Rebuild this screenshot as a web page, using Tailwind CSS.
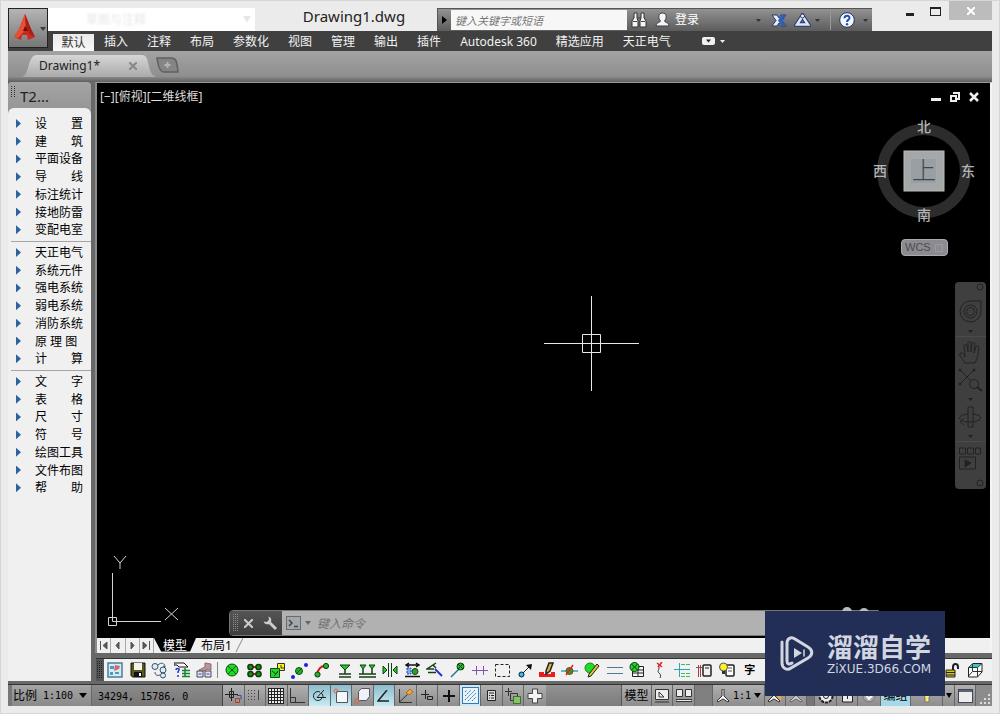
<!DOCTYPE html>
<html lang="zh-CN">
<head>
<meta charset="utf-8">
<title>Drawing1.dwg</title>
<script src="https://cdn.jsdelivr.net/npm/@tailwindcss/browser@4"></script>
</head>
<body class="font-['Noto_Sans','Noto_Sans_CJK_SC',sans-serif] text-xs text-black">
<div class="relative flex min-h-screen flex-col border border-[#d6d6d6] bg-[#ebebeb] px-[7px] pb-[7px]">

  <!-- Title bar -->
  <header class="flex h-[30px] items-end">
    <div class="ml-10 flex h-[23px] w-[207px] items-center justify-between bg-white pr-1 pl-[38px] text-[#e6e6e6]"><span class="blur-[1px]">草图与注释</span><span class="text-[8px]">▼</span></div>
    <h1 class="flex h-[30px] flex-1 items-center justify-center pl-4 text-[15px] whitespace-nowrap text-[#222]">Drawing1.dwg</h1>
    <div class="flex h-[23px] w-[435px] items-center border-t border-l border-[#555] bg-linear-to-b from-[#929292] to-[#5c5c5c]">
      <button aria-label="展开" class="flex w-[13px] justify-center"><svg width="5" height="8"><path d="M0 0L5 4L0 8Z"/></svg></button>
      <input aria-label="搜索" placeholder="键入关键字或短语" class="h-[20px] w-[176px] bg-[#f7f7f7] px-1 text-[11px] italic placeholder:text-[#777]">
      <button aria-label="查找" class="ml-1"><svg width="16" height="16" viewBox="0 0 16 16" fill="#f5f5f5" stroke="#333"><path d="M3 1h3v5l1 3v6H1V9l2-3zM10 1h3v5l2 3v6H9V9l1-3z"/><path d="M6 6h4M2 9.500h4M10 9.500h4" stroke="#444"/></svg></button>
      <button class="ml-2 flex items-center gap-[5px] text-white"><svg width="15" height="16" viewBox="0 0 14 16" fill="#f5f5f5" stroke="#3a3f50"><path d="M7 1c4.500 0 4.500 5 2 8 1 2 4 1 4.500 5H.5C1 10 4 11 5 9 2.500 6 2.500 1 7 1z"/></svg>登录</button>
      <span class="ml-auto flex items-center">
        <svg class="mr-[10px]" width="5" height="3"><path d="M0 0h5L2.500 3z" fill="#333"/></svg>
        <button aria-label="Exchange"><svg width="16" height="15" viewBox="0 0 16 15"><path d="M1 2h5l2 3 2-3h5l-4 5.500 4 5.500h-5l-2-3-2 3H1l4-5.500z" fill="#e8eefc" stroke="#27396b"/><path d="M10.500 2H15l-4 5.500 4 5.500h-4.500L7 7.500z" fill="#2c5fb8"/></svg></button>
        <button aria-label="Autodesk 360" class="ml-[7px] flex items-center gap-1"><svg width="17" height="15" viewBox="0 0 17 15"><path d="M8.500 3L3 11.500h11z" fill="none" stroke="#27396b" stroke-width="4.500"/><path d="M8.500 3L3 11.500h11z" fill="none" stroke="#dfe7fa" stroke-width="2.500"/><circle cx="8.500" cy="3" r="2" fill="#eef" stroke="#27396b"/></svg><svg width="5" height="3"><path d="M0 0h5L2.500 3z" fill="#333"/></svg></button>
        <span class="mx-2 ml-[10px] h-5 w-px bg-[#999]"></span>
        <button aria-label="帮助" class="mr-1 flex items-center gap-2"><svg width="16" height="16" viewBox="0 0 16 16"><circle cx="8" cy="8" r="7.300" fill="#f4f7ff" stroke="#26345e"/><path d="M5.500 6.200C5.500 2.800 10.700 3 10.500 6 10.400 8 8 7.800 8 10" fill="none" stroke="#2250b0" stroke-width="2"/><circle cx="8" cy="12.200" r="1.200" fill="#2250b0"/></svg><svg width="5" height="3"><path d="M0 0h5L2.500 3z" fill="#333"/></svg></button>
      </span>
    </div>
    <div class="flex h-[30px] w-[120px] items-start justify-end">
      <button aria-label="最小化" class="mt-3 mr-4 h-[3px] w-2 bg-[#222]"></button>
      <button aria-label="最大化" class="mt-[6px] mr-2 h-[9px] w-[11px] border border-t-2 border-[#222]"></button>
      <button aria-label="关闭" class="flex h-[19px] w-[43px] items-center justify-center bg-[#bcbcbc]"><svg width="8" height="8" stroke="#fff" stroke-width="2"><path d="M0 0L8 8M8 0L0 8"/></svg></button>
    </div>
  </header>

  <!-- Ribbon menu -->
  <nav class="flex h-5 items-end gap-[19px] bg-[#404040] pl-[45px] leading-[18px] whitespace-nowrap text-[#f2f2f2]">
    <span class="flex items-end gap-[10px]"><a href="#" class="h-[17px] w-[41px] bg-linear-to-b from-[#e9e9ea] to-[#f8f8f8] text-center leading-[17px] text-[#333]">默认</a><a href="#">插入</a></span>
    <a href="#">注释</a><a href="#">布局</a><a href="#">参数化</a><a href="#">视图</a><a href="#">管理</a><a href="#">输出</a><a href="#">插件</a><a href="#">Autodesk 360</a><a href="#">精选应用</a><a href="#">天正电气</a>
    <button aria-label="功能区选项" class="ml-3 flex items-center gap-[5px] self-center"><svg width="13" height="8"><rect width="13" height="8" rx="2" fill="#f0f0f0"/><path d="M4 2.500h5L6.500 5.500z" fill="#222"/></svg><svg width="5" height="3"><path d="M0 0h5L2.500 3z" fill="#eee"/></svg></button>
  </nav>

  <!-- File tabs -->
  <div class="flex h-[26px] items-end bg-linear-to-b from-[#a3a3a3] to-[#8e8e8e] pl-[14px]">
    <div class="relative flex h-[22px] w-[134px] items-center justify-between pr-[19px] pl-[17px] text-xs text-[#222]">
      <svg class="absolute inset-0" width="134" height="22"><defs><linearGradient id="tab" x2="0" y2="1"><stop stop-color="#d6d6d6"/><stop offset="1" stop-color="#aaa"/></linearGradient></defs><path d="M0 22C8 20 5 0 15 0H120C129 0 124 18 134 22z" fill="url(#tab)"/></svg>
      <a href="#" class="relative">Drawing1*</a>
      <button aria-label="关闭图形" class="relative"><svg width="8" height="8" stroke="#888" stroke-width="2"><path d="M0 0L8 8M8 0L0 8"/></svg></button>
    </div>
    <button aria-label="新图形" class="mb-1"><svg width="23" height="16" viewBox="0 0 23 16"><path d="M1 1h14c5 0 6 3 7 14H8C4 15 2 9 1 1z" fill="#858585" stroke="#606060" stroke-width="1.500"/><path d="M11.500 5v6M8.500 8h6" stroke="#b5b5b5" stroke-width="2"/></svg></button>
  </div>
  <div class="h-[5px] bg-linear-to-b from-[#888] to-[#606060]"></div>

  <main class="flex flex-1 bg-[#686868]">
    <!-- Screen menu -->
    <aside class="mb-[3px] flex w-[83px] flex-col rounded-t bg-linear-to-b from-[#a4a4a4] to-[#979797] to-[26px]">
      <div class="flex h-[26px] items-start gap-[5px] pt-1 pl-[3px]">
        <svg width="4" height="12" stroke="#333" stroke-dasharray="1 1"><path d="M.5 0v12M3.500 0v12"/></svg>
        <span class="pt-[2px] text-[15px] leading-4 text-[#222]">T2...</span>
      </div>
      <nav class="flex flex-1 flex-col rounded-t-md bg-[#f0f0f0] pt-[7px]">
        <ul class="grid h-[124px] auto-rows-fr [&_a]:flex [&_a]:items-center [&_a]:gap-[14px] [&_a]:pl-2 [&_a]:leading-[17px] [&_a]:whitespace-pre [&_a]:before:h-[9px] [&_a]:before:w-[5px] [&_a]:before:bg-[#2d639c] [&_a]:before:[clip-path:polygon(0_0,100%_50%,0_100%)]">
          <li><a href="#">设　　置</a></li><li><a href="#">建　　筑</a></li><li><a href="#">平面设备</a></li><li><a href="#">导　　线</a></li><li><a href="#">标注统计</a></li><li><a href="#">接地防雷</a></li><li><a href="#">变配电室</a></li>
        </ul>
        <hr class="mt-[2px] mb-[2px] ml-[3px] border-[#a5a5a5]">
        <ul class="grid h-[124px] auto-rows-fr [&_a]:flex [&_a]:items-center [&_a]:gap-[14px] [&_a]:pl-2 [&_a]:leading-[17px] [&_a]:whitespace-pre [&_a]:before:h-[9px] [&_a]:before:w-[5px] [&_a]:before:bg-[#2d639c] [&_a]:before:[clip-path:polygon(0_0,100%_50%,0_100%)]">
          <li><a href="#">天正电气</a></li><li><a href="#">系统元件</a></li><li><a href="#">强电系统</a></li><li><a href="#">弱电系统</a></li><li><a href="#">消防系统</a></li><li><a href="#">原 理 图</a></li><li><a href="#">计　　算</a></li>
        </ul>
        <hr class="mt-[2px] mb-[2px] ml-[3px] border-[#a5a5a5]">
        <ul class="grid h-[124px] auto-rows-fr [&_a]:flex [&_a]:items-center [&_a]:gap-[14px] [&_a]:pl-2 [&_a]:leading-[17px] [&_a]:whitespace-pre [&_a]:before:h-[9px] [&_a]:before:w-[5px] [&_a]:before:bg-[#2d639c] [&_a]:before:[clip-path:polygon(0_0,100%_50%,0_100%)]">
          <li><a href="#">文　　字</a></li><li><a href="#">表　　格</a></li><li><a href="#">尺　　寸</a></li><li><a href="#">符　　号</a></li><li><a href="#">绘图工具</a></li><li><a href="#">文件布图</a></li><li><a href="#">帮　　助</a></li>
        </ul>
      </nav>
    </aside>

    <div class="ml-1 flex min-w-0 flex-1 flex-col">
      <!-- Drawing canvas -->
      <section class="relative flex-1 border-t border-r-2 border-l-2 border-t-[#999] border-r-[#f4f4f4] border-l-[#8c8c8c] bg-black">
        <div class="flex items-center justify-between pt-[6px] pr-[11px] pl-[3px]">
          <span class="text-[#ddd]">[−][俯视][二维线框]</span>
          <span class="flex items-center gap-[9px]">
            <button aria-label="最小化窗口" class="mt-[5px] h-[3px] w-[10px] bg-[#eee]"></button>
            <button aria-label="还原窗口"><svg width="10" height="10" fill="none" stroke="#eee" stroke-width="2"><path d="M1 4h5v5H1zM3 1h6v6H7"/></svg></button>
            <button aria-label="关闭窗口"><svg width="10" height="10" stroke="#eee" stroke-width="2.500"><path d="M1 1L9 9M9 1L1 9"/></svg></button>
          </span>
        </div>

        <!-- Crosshair -->
        <svg class="absolute top-[213px] left-[447px]" width="95" height="95" fill="none" stroke="#e8e8e8"><path d="M0 47.500H95M47.500 0V95M38.500 38.500h18v18h-18z"/></svg>

        <!-- View cube -->
        <div class="absolute top-[34px] right-[14px] text-[14px] leading-4 font-medium text-[#b4b4b4]">
          <svg width="104" height="108" viewBox="0 0 104 108"><circle cx="52" cy="54" r="41.500" fill="none" stroke="#2c2c2c" stroke-width="11"/><rect x="32" y="34" width="40" height="40" fill="#a5a8a8" stroke="#bbb"/><rect x="39" y="42" width="25" height="24" fill="#9a9fa5"/></svg>
          <span class="absolute top-[2px] left-[45px]">北</span>
          <span class="absolute top-[46px] left-[1px]">西</span>
          <span class="absolute top-[46px] right-px">东</span>
          <span class="absolute top-[90px] left-[45px]">南</span>
          <span class="absolute top-[41px] left-[40px] text-2xl leading-6 font-light text-[#40454c]">上</span>
        </div>
        <button class="absolute top-[156px] right-[42px] flex h-[17px] w-[47px] items-center gap-1 rounded border border-[#a9a9ae] bg-[#8b8b91] pl-[3px] font-['Liberation_Sans',sans-serif] text-[11px] text-[#4b4b50]">WCS<span class="size-2 border border-[#9b9ba1]"></span></button>

        <!-- Navigation bar -->
        <div class="absolute top-[199px] right-1 rounded bg-[#3f3f3f]">
          <svg width="31" height="207" viewBox="0 0 31 207" fill="none" stroke="#222">
            <circle cx="25" cy="5" r="3"/><circle cx="25" cy="201" r="3"/>
            <path d="M0 54.500h31M0 159.500h31" stroke="#4b4b4b"/>
            <path d="M15.500 19H26v11a10.500 10.500 0 1 1-10.500-11z"/><circle cx="15.500" cy="29.500" r="6.500"/><circle cx="15.500" cy="29.500" r="4"/>
            <g fill="#222" stroke="none"><path d="M13 48h5l-2.500 3zM13 116h5l-2.500 3zM13 153h5l-2.500 3z"/></g>
            <path d="M10 81C8 76 4 75 5 72s4 0 5 3l-1-11c0-2 3-2 3 0l1 6V61c0-2 3-2 3 0v9l1-8c0-2 3-2 3 0l-1 9 2-6c1-2 3-1 3 1-1 5-1 10-4 15z"/>
            <path d="M5 88l14 14M19 88L5 102"/><g fill="#222"><circle cx="5" cy="88" r="1"/><circle cx="19" cy="88" r="1"/><circle cx="5" cy="102" r="1"/></g><circle cx="19" cy="102" r="4.500" fill="#3f3f3f"/><path d="M22 105l5 4" stroke-width="2"/>
            <path d="M13 125h5v20h-5zM13 132c-14 2-9 8 2 8s16-6 3-8M9 136l-4 4 4 3"/>
            <path d="M4.500 166h6v6h-6zM12.500 166h6v6h-6zM20.500 166h5v6h-5zM4.500 175h16v12h-16z"/><path d="M10 178l6 3-6 4z" fill="#222"/>
          </svg>
        </div>

        <!-- UCS icon -->
        <svg class="absolute bottom-[7px] left-[9px]" width="74" height="76" fill="none" stroke="#d4d4d4"><path d="M6.500 18V66.500H55M2.500 62.500h8v8h-8zM8 1l6 7 6-7M14 8v6M59 53l13 12M72 53L59 65"/></svg>

        <!-- Command line -->
        <div class="absolute bottom-[2px] left-[132px] flex h-[26px] w-[650px] overflow-hidden rounded-l-sm border border-[#777]">
          <div class="flex w-[52px] items-center bg-linear-to-b from-[#555] to-[#3e3e3e] pl-[3px]">
            <svg width="5" height="18" stroke="#8a8a8a" stroke-dasharray="1 1"><path d="M.5 0v18M2.500 0v18M4.500 0v18"/></svg>
            <button aria-label="关闭命令行" class="ml-[6px]"><svg width="9" height="9" stroke="#ccc" stroke-width="2"><path d="M0 0L9 9M9 0L0 9"/></svg></button>
            <button aria-label="自定义" class="ml-[10px]"><svg width="15" height="15" viewBox="0 0 15 15"><path d="M5 5L13 13" stroke="#ccc" stroke-width="3"/><path d="M5.500 .5A4 4 0 1 1 .5 5.500L4 6 6 4z" fill="#ccc"/></svg></button>
          </div>
          <label class="flex flex-1 items-center gap-[4px] bg-[#b1b1b1] pl-1">
            <svg width="15" height="14"><rect x=".5" y=".5" width="14" height="13" fill="#a3a8ad" stroke="#666c72"/><path d="M3 4l3 3-3 3M8 10.500h4" fill="none" stroke="#444" stroke-width="1.500"/></svg>
            <svg width="6" height="4"><path d="M0 0h6L3 4z" fill="#666"/></svg>
            <input aria-label="命令" placeholder="键入命令" class="ml-[2px] h-5 flex-1 text-xs italic placeholder:text-[#707070]">
          </label>
        </div>
        <svg class="absolute right-[120px] bottom-[26px]" width="30" height="5" fill="#bbb"><circle cx="7" cy="5" r="5"/><circle cx="24" cy="6" r="5"/></svg>
      </section>

      <!-- Layout tabs -->
      <nav class="flex h-[15px] items-stretch border-r-2 border-l-2 border-r-[#f4f4f4] border-l-[#8c8c8c] bg-[#f0f0f0] leading-[15px]">
        <div class="flex w-[57px] divide-x divide-[#aaa] border-r border-[#aaa] [&_button]:flex [&_button]:flex-1 [&_button]:items-center [&_button]:justify-center [&_svg]:fill-[#555] [&_svg]:stroke-[#555]">
          <button aria-label="第一个"><svg width="8" height="9"><path d="M.5 0v9M7 1v7L3 4.500z"/></svg></button>
          <button aria-label="上一个"><svg width="5" height="9"><path d="M4 1v7L1 4.500z"/></svg></button>
          <button aria-label="下一个"><svg width="5" height="9"><path d="M1 1v7L4 4.500z"/></svg></button>
          <button aria-label="最后一个"><svg width="8" height="9"><path d="M7.500 0v9M1 1v7L5 4.500z"/></svg></button>
        </div>
        <a href="#" class="flex w-[42px] items-center justify-center bg-black text-white [clip-path:polygon(0_0,100%_0,86%_90%,17%_90%)]">模型</a>
        <a href="#" class="flex items-center gap-[3px] pl-[5px]">布局1<svg width="9" height="15" stroke="#888"><path d="M1 14L8 0"/></svg></a>
      </nav>

      <!-- Tool buttons -->
      <div class="mt-[5px] mb-[3px] ml-px flex h-[23px] items-stretch border-t border-[#333] bg-[#f1f1f1] pr-[6px]">
        <svg class="bg-[#555]" width="8" height="22" stroke="#222" stroke-dasharray="1 1"><path d="M1.500 2v18M3.500 2v18M5.500 2v18"/></svg>
        <div class="grid w-[112px] grid-cols-5 place-items-center">
          <button aria-label="图形设置"><svg width="16" height="16" viewBox="0 0 16 16"><path d="M1 1h14v14H1z" fill="#d9eaf5" stroke="#4a7f99" stroke-width="1.500"/><path d="M3 4h4v3H3zM3 10h3v3H3zM8 10h4v2H8z" fill="#4c9cc0"/><path d="M8 3l5 1-1 3-5 2z" fill="#cf6a72"/></svg></button>
          <button aria-label="保存"><svg width="16" height="16"><path d="M1 1h14v14H2.500L1 13.500z" fill="#5b571c" stroke="#111"/><path d="M4 1h8v7H4z" fill="#f2f2f2"/><path d="M4 10h8v5H4z" fill="#111"/><path d="M9 11h2v3H9z" fill="#fff"/></svg></button>
          <button aria-label="替换"><svg width="17" height="17" fill="#dcebf6" stroke="#33506a"><circle cx="4" cy="4.500" r="3"/><path d="M7 3c3-3 7-2 7 2l-2-1M4 10c0 3 2 4 5 3" fill="none"/><circle cx="12" cy="8" r="3"/><circle cx="12" cy="13.500" r="2.500"/></svg></button>
          <button aria-label="查询"><svg width="17" height="16" viewBox="0 0 17 16"><path d="M0 1h10l4 4H5L3 3H0z" fill="#fff" stroke="#111"/><path d="M8 8.500h8M8 11.500h8M8 14.500h8M11 6v9" stroke="#14832c" stroke-width="1.500"/><path d="M2 8c0-2 4-2 3 0L4 10v1M4 13v2" fill="none" stroke="#2437db" stroke-width="1.500"/></svg></button>
          <button aria-label="对齐块"><svg width="17" height="16"><path d="M9 1l6 1v6l-3-1-7 3-2-2 6-3z" fill="#c98d94" stroke="#777"/><path d="M1 9h6v6H1zM9 9h6v6H9z" fill="#e4e7fa" stroke="#444"/><path d="M2.500 12h3M10.500 12h3" stroke="#2437db"/></svg></button>
        </div>
        <span class="my-[3px] ml-px w-px bg-[#888]"></span>
        <div class="ml-[3px] grid flex-1 grid-cols-34 place-items-center">
          <button aria-label="任意布置"><svg width="14" height="14"><circle cx="7" cy="7" r="6" fill="#18e01f" stroke="#124d12"/><path d="M3 3l8 8M11 3l-8 8" stroke="#124d12"/></svg></button>
          <button aria-label="矩形布置"><svg width="15" height="15"><path d="M3 4h9M3 11h9" stroke="#d81818" stroke-width="2"/><g fill="#149318" stroke="#123812" stroke-width="1.500"><circle cx="3.500" cy="4" r="2.600"/><circle cx="11.500" cy="4" r="2.600"/><circle cx="3.500" cy="11" r="2.600"/><circle cx="11.500" cy="11" r="2.600"/></g></svg></button>
          <button aria-label="房间复制"><svg width="17" height="17"><path d="M8.500 1.500h7v7h-7z" fill="#fbf42c" stroke="#333"/><path d="M1.500 6.500h9v9h-9z" fill="#1cdb22" stroke="#124d12"/><path d="M3 9l4 3 2-3M5 14l4-4M12 3v3h3" stroke="#333" fill="none"/></svg></button>
          <button aria-label="穿墙布置"><svg width="17" height="17"><circle cx="8" cy="9" r="3.500" fill="#1fb52a" stroke="#124d12"/><path d="M5 12l6-6" stroke="#124d12"/><circle cx="2" cy="15" r="2" fill="#1e1ee0"/><circle cx="15" cy="3" r="2" fill="#1e1ee0"/></svg></button>
          <button aria-label="弧线布置"><svg width="16" height="16"><path d="M3 13C4 7 7 4 11 4" fill="none" stroke="#d81818" stroke-width="2"/><circle cx="12" cy="4" r="2.600" fill="#1fb52a" stroke="#123812"/><circle cx="3.500" cy="12.500" r="2.600" fill="#1fb52a" stroke="#123812"/></svg></button>
          <button aria-label="插座"><svg width="14" height="15" stroke="#143f14"><path d="M2 2h10L7 7z" fill="#24c52c"/><path d="M7 7v4M1 11h12M1 14h12" stroke-width="1.500"/></svg></button>
          <button aria-label="双插座"><svg width="17" height="15" stroke="#143f14"><path d="M1 2h6L4 6zM10 2h6l-3 4z" fill="#24c52c"/><path d="M4 6v5M13 6v5M0 11h17M0 14h17" stroke-width="1.500"/></svg></button>
          <button aria-label="镜像"><svg width="16" height="16" stroke="#143f14"><path d="M1 4v8l4-4zM15 4v8l-4-4z" fill="#24c52c"/><path d="M6.500 1v14M9.500 1v14"/></svg></button>
          <button aria-label="标注设备"><svg width="17" height="16"><path d="M3 3h11M5 1L2 3l3 2M12 1l3 2-3 2M1 14.500h15" stroke="#111" stroke-width="1.500" fill="none"/><path d="M3 6h4v6H3z" fill="#86a9e8" stroke="#2243c8" stroke-dasharray="2 1"/><circle cx="11" cy="9.500" r="3" fill="#24a52c" stroke="#143f14"/></svg></button>
          <button aria-label="旋转"><svg width="17" height="16" fill="none"><path d="M10 1L1 7h7M2 10.500h8M7 3l3 3" stroke="#143f14" stroke-width="1.500"/><path d="M9 7l7 7" stroke="#2430d8" stroke-width="2"/></svg></button>
          <button aria-label="引线"><svg width="15" height="16"><path d="M1 15L9 7" stroke="#167790" stroke-width="1.500"/><circle cx="10.500" cy="4.500" r="3.500" fill="#1fc52a" stroke="#123812"/><path d="M8 2l5 5M13 2L8 7" stroke="#123812"/></svg></button>
          <button aria-label="断线"><svg width="16" height="9" stroke="#8054b8"><path d="M0 4.500h16M4.500 0v9M11.500 0v9"/></svg></button>
          <button aria-label="选框"><svg width="15" height="15" fill="none" stroke="#222" stroke-dasharray="3 2"><path d="M.5 1.500h14v12H.5z"/></svg></button>
          <button aria-label="拉伸"><svg width="14" height="15"><path d="M3 12l8-8" stroke="#222"/><path d="M8 2l6-1-1 6z" fill="#111"/><circle cx="3.500" cy="11.500" r="2.500" fill="#2ec5d0" stroke="#115"/></svg></button>
          <button aria-label="擦除"><svg width="17" height="16"><path d="M0 10h5v2h7v-2h4v5H0z" fill="#ed1c1c"/><path d="M7 9l3-8h4l-3 8-4 3z" fill="#e0b34a" stroke="#222" stroke-width="1.500"/></svg></button>
          <button aria-label="打断"><svg width="17" height="15"><path d="M0 8h17" stroke="#38a4bd" stroke-width="1.500"/><circle cx="8.500" cy="8" r="3.500" fill="#2c9b31" stroke="#8a3a17"/><path d="M5 12l7-10" stroke="#d82a18" stroke-width="1.500"/></svg></button>
          <button aria-label="编辑"><svg width="16" height="16"><circle cx="6" cy="6" r="5" fill="#21d92a" stroke="#178a1d"/><path d="M5 12L13 2l2 2L7 14l-3 1z" fill="#d9c52a" stroke="#222"/></svg></button>
          <button aria-label="平行线"><svg width="16" height="9" stroke="#507894"><path d="M0 1.500h16M0 7.500h16"/></svg></button>
          <button aria-label="设备表"><svg width="16" height="16"><path d="M3.500 4.500h11v10h-11zM3.500 8h11M3.500 11h11M9 4v10" fill="#f6f6f6" stroke="#222"/><circle cx="5.500" cy="5" r="4.500" fill="#1fd52a" stroke="#123812"/><path d="M2.500 2l6 6M8.500 2l-6 6" stroke="#123812"/></svg></button>
          <button aria-label="导线"><svg width="10" height="16" fill="none"><path d="M4 5c0 4-2 4 0 6s2 2 1 5" stroke="#333"/><path d="M2 1l5 4M7 0L3 5" stroke="#e21d1d" stroke-width="1.500"/></svg></button>
          <button aria-label="编组导线"><svg width="17" height="16" fill="none"><path d="M0 7.500h16M5.500 1v14" stroke="#2ba5bd"/><path d="M7 2.500h9M7 11.500h9M7 14.500h9" stroke="#43bb59" stroke-dasharray="4 1"/></svg></button>
          <button aria-label="标注"><svg width="17" height="16" fill="none"><path d="M0 5.500h6M2.500 3v12M4.500 3v12" stroke="#a2404b"/><rect x="7" y="3" width="8" height="11" rx="1" stroke="#222" stroke-width="1.500"/><path d="M9 6h4" stroke="#222"/></svg></button>
          <button aria-label="灯具标注"><svg width="17" height="16"><rect x="7" y="3" width="8" height="11" rx="1" fill="#fff" stroke="#222" stroke-width="1.500"/><path d="M9 6h4M9 9h4" stroke="#555"/><circle cx="4.500" cy="5" r="4" fill="#f9f12b" stroke="#555"/><path d="M3 9h3v3H3z" fill="#333"/></svg></button>
          <button class="text-[11px] font-bold">字</button>
          <button aria-label="解锁" class="col-start-33"><svg width="15" height="15"><path d="M8 7V4c0-4 5-4 5 0v2" fill="none" stroke="#222" stroke-width="2"/><path d="M1 7h9v7H1z" fill="#d5c81e" stroke="#222"/><path d="M1 9.500h9M1 12h9" stroke="#222"/></svg></button>
          <button aria-label="三维视图"><svg width="16" height="16"><path d="M1.500 5.500L6 1.500h9V10l-4.500 5h-9z" fill="#f3fbfb" stroke="#222"/><path d="M2 5.500L6 2h8l-4 3.500z" fill="#35c4c8"/><path d="M1.500 5.500h9v9M10.500 5.500L15 1.500M1.500 14l4-4.500V2M6 9.500h9" fill="none" stroke="#333"/></svg></button>
        </div>
      </div>
    </div>
  </main>

  <!-- Status bar -->
  <footer class="flex h-[22px] items-stretch border-t border-[#333] bg-linear-to-b from-[#939393] to-[#7b7b7b] font-['DejaVu_Sans_Mono','Noto_Sans_CJK_SC',monospace] text-[10px] whitespace-pre">
    <button class="flex w-[84px] items-center border-r border-l-4 border-r-[#666] border-l-[#777] bg-linear-to-b from-[#a5a5a5] to-[#8a8a8a] pl-px"><span class="text-xs">比例</span><span class="ml-[6px]">1:100</span><svg class="ml-[6px]" width="8" height="5"><path d="M0 0h8L4 5z"/></svg></button>
    <output class="flex w-[131px] items-center border-r border-[#444] bg-linear-to-b from-[#8b8b8b] to-[#777] pt-[2px] pl-[6px]">34294, 15786, 0</output>
    <div class="grid w-[323px] grid-cols-15 divide-x divide-[#666] bg-linear-to-b from-[#b0b0b0] to-[#8d8d8d] [&_button]:flex [&_button]:items-center [&_button]:justify-center [&_svg]:fill-none">
      <button aria-label="推断约束"><svg width="17" height="16" stroke="#222"><path d="M0 6.500h13M6.500 0v13M4.500 3.500h4v6h-4z"/><path d="M10.500 10.500h4v4h-4z" stroke="#b33b2c"/><path d="M12 7.500h4v4" stroke="#2b52a8"/></svg></button>
      <button aria-label="捕捉"><svg width="13" height="13" stroke="#444" stroke-dasharray="1 2"><path d="M0 1.500h9M0 4.500h9M0 7.500h9M0 10.500h9"/><path d="M10.500 1v10" stroke-dasharray="none"/></svg></button>
      <button aria-label="栅格"><svg width="16" height="16" stroke="#222"><rect width="16" height="16" style="fill:#eee" stroke="none"/><path d="M0 .5h16M0 3.500h16M0 6.500h16M0 9.500h16M0 12.500h16M0 15.500h16M.5 0v16M3.500 0v16M6.500 0v16M9.500 0v16M12.500 0v16M15.500 0v16"/></svg></button>
      <button aria-label="正交"><svg width="15" height="15" stroke="#333"><path d="M.5 0v14.500h14.500M.5 9.500h5v5"/></svg></button>
      <button aria-label="极轴" class="bg-linear-to-b from-[#8dbccc] to-[#c6ebf5]"><svg width="14" height="14" stroke="#222"><path d="M8 3A4.500 4.500 0 1 0 10 9M5 8.500L12 1M5 8.500h9M9 4c2 1 2 3 2 4"/></svg></button>
      <button aria-label="对象捕捉" class="bg-linear-to-b from-[#8dbccc] to-[#c6ebf5]"><svg width="16" height="16"><path d="M3.500 3.500h11v11h-11z" style="fill:#f4f7fb" stroke="#555"/><circle cx="3" cy="3" r="2" stroke="#d8663a"/></svg></button>
      <button aria-label="三维捕捉"><svg width="17" height="16"><path d="M4.500 3.500l3-3h8v8l-3 4h-8z" style="fill:#eef1f7" stroke="#556"/><circle cx="3" cy="13" r="2.200" stroke="#d8663a"/></svg></button>
      <button aria-label="追踪" class="bg-linear-to-b from-[#8dbccc] to-[#c6ebf5]"><svg width="13" height="12" stroke="#222" stroke-width="1.500"><path d="M10 0L1 11h11"/></svg></button>
      <button aria-label="动态 UCS"><svg width="17" height="16" stroke="#333"><path d="M2.500 1v13.500H15M2.500 14L11 6"/><path d="M9 5l4-4 3 3-4 3z" style="fill:#f1a53b" stroke="#b56c1b"/></svg></button>
      <button aria-label="动态输入"><svg width="13" height="12" stroke="#222"><path d="M0 4.500h8M4.500 0v9M6.500 6.500h5v3h-5z"/></svg></button>
      <button aria-label="线宽"><svg width="12" height="12" stroke="#111" stroke-width="2"><path d="M0 6h12M6 0v12"/></svg></button>
      <button aria-label="透明度" class="bg-[#cfe8f5]"><svg width="17" height="17" stroke="#3778ad"><rect x=".5" y=".5" width="16" height="16" style="fill:#e6f3fa"/><path d="M3 5l2-2M3 9l6-6M3 13L13 3M6 14l8-8M10 14l4-4" stroke-dasharray="2 1"/></svg></button>
      <button aria-label="快捷特性"><svg width="9" height="11" stroke="#222"><path d="M.5.5h8v10h-8z" style="fill:#ddd"/><path d="M2 3h5M2 5.500h1M4 5.500h3M2 8h1M4 8h3"/></svg></button>
      <button aria-label="选择循环"><svg width="17" height="16" stroke="#333"><path d="M0 3.500h7M3.500 0v8M5.500 5.500h7v7h-7z"/><rect x="8.500" y="8.500" width="7" height="7" style="fill:#87c26a" stroke="#3d732d"/></svg></button>
      <button aria-label="注释监视器"><svg width="16" height="16"><path d="M5.500 1h5v4.500H15v5h-4.500V15h-5v-4.500H1v-5h4.500z" style="fill:#f3f3f3" stroke="#444"/></svg></button>
    </div>
    <div class="ml-auto flex divide-x divide-[#666] border-l border-[#555] bg-linear-to-b from-[#b0b0b0] to-[#8d8d8d] [&_button]:flex [&_button]:items-center [&_button]:justify-center">
      <button class="w-[30px] text-xs">模型</button>
      <button aria-label="布局" class="w-[21px]"><svg width="15" height="14" fill="none" stroke="#333"><path d="M.5.5h13v10H.5z" fill="#eee"/><path d="M4 3v5h5M4 3l5 5M0 13h14"/></svg></button>
      <button aria-label="快速查看" class="w-[22px]"><svg width="16" height="14" fill="#eee" stroke="#333"><path d="M.5.5h6v7h-6zM9.500.5h6v7h-6z"/><path d="M0 10.500h16v2H0z"/></svg></button>
      <span class="w-[18px] bg-[#808080]"></span>
      <button class="w-[52px] gap-[3px]"><svg width="14" height="14" fill="#f4f4f4" stroke="#333"><path d="M6 0h2v7l5 5-1 1-5-3-5 3-1-1 5-5z"/></svg>1:1<svg width="7" height="5"><path d="M0 0h7L3.500 5z"/></svg></button>
      <button aria-label="注释可见性" class="w-[21px]"><svg width="16" height="14" fill="#eee" stroke="#333"><path d="M6 0h2v7l5 5-1 1-5-3-5 3-1-1 5-5z"/><path d="M10 8l4-3v7z" fill="#f3a83b" stroke="none"/></svg></button>
      <button aria-label="自动缩放" class="w-[21px]"><svg width="14" height="14" fill="#ccc" stroke="#666"><path d="M6 0h2v7l5 5-1 1-5-3-5 3-1-1 5-5z"/></svg></button>
      <span class="w-[8px] bg-[#777]"></span>
      <button aria-label="切换工作空间" class="w-[22px]"><svg width="16" height="16" fill="#eee" stroke="#222"><circle cx="8" cy="8" r="6.500" stroke-width="2" stroke-dasharray="3 1"/><circle cx="8" cy="8" r="2.500"/></svg></button>
      <button aria-label="锁定" class="w-[21px]"><svg width="11" height="14" fill="#eee" stroke="#222"><path d="M.5 1h10v12H.5zM5.500 4v6"/></svg></button>
      <button aria-label="硬件加速" class="w-[23px]"><svg width="14" height="14" fill="#aaa" stroke="#777"><circle cx="7" cy="7" r="6"/><path d="M4 6l3 4 5-6" stroke="#fff" stroke-width="2" fill="none"/></svg></button>
      <button class="w-[30px] bg-[#a5d9e8] text-xs">编组</button>
      <button aria-label="隔离对象" class="w-[32px]"><svg width="14" height="15" fill="#f8ee72" stroke="#777"><path d="M7 0c6 0 6 6 2 9v5H5V9C1 6 1 0 7 0z"/></svg></button>
      <button aria-label="状态栏菜单" class="w-[12px]"><svg width="6" height="5"><path d="M0 0h6L3 5z"/></svg></button>
      <button aria-label="全屏显示" class="w-[21px]"><svg width="15" height="14"><rect x=".5" y=".5" width="14" height="13" fill="#eee" stroke="#445"/><path d="M1 2h13" stroke="#56647c" stroke-width="2"/></svg></button>
      <svg class="w-[16px] self-end bg-[#8c8c8c]" width="16" height="21" fill="#ddd"><path d="M12 9h2v2h-2zM8 13h2v2H8zM12 13h2v2h-2zM4 17h2v2H4zM8 17h2v2H8zM12 17h2v2h-2z"/></svg>
    </div>
  </footer>

  <!-- Application button, spanning the title and menu rows -->
  <button aria-label="应用程序菜单" class="absolute top-[7px] left-[7px] flex size-10 items-center border border-[#222] bg-linear-to-b from-[#b5b5b5] to-[#777] pl-1">
    <svg width="34" height="30" viewBox="0 0 34 30"><path d="M12 1L18 16l4 8-7 3-1-5H9l-1 5-7-3 5-8z" fill="#c92a1d"/><path d="M12 1L6 16 1 24l4 1 8-9z" fill="#e84f35"/><path d="M12 1l6 15 4 8-5-3-4-7z" fill="#a81d16"/><path d="M10 18l2-5 3 5z" fill="#6b0f0d"/><path d="M27 14h6l-3 4z" fill="#333c4d"/></svg>
  </button>

  <!-- Brand badge -->
  <div class="absolute right-[54px] bottom-[17px] flex h-[85px] w-[180px] items-center gap-3 bg-[#222e55] pl-[15px] text-[#d2d6e0]">
    <svg width="35" height="37" viewBox="0 0 35 37" fill="none" stroke="#d2d6e0" stroke-width="3" stroke-linecap="round"><path d="M2 7v21c0 5 5 8 9 5l17-10c5-3 5-8 0-11L15 4c-4-3-8 0-8 4v18c0 3 2 4 5 2"/><path d="M14 13v10l8-5z" fill="#d2d6e0" stroke="none"/><path d="M24 15v6" stroke-width="1.500"/></svg>
    <div class="flex flex-col gap-[2px] whitespace-nowrap"><span class="text-[26px] leading-7 font-bold">溜溜自学</span><span class="font-['DejaVu_Sans',sans-serif] text-xs leading-3">ZiXUE.3D66.COM</span></div>
  </div>
</div>
</body>
</html>
